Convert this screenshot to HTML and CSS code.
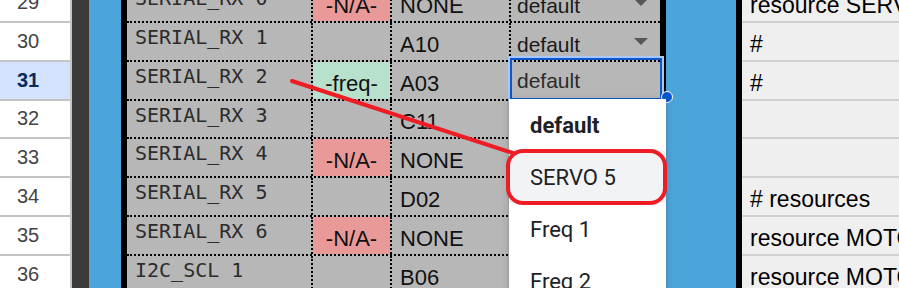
FILE: index.html
```html
<!DOCTYPE html>
<html lang="en">
<head>
    <meta charset="UTF-8">
    <title>Resource mapping</title>
    <link rel="stylesheet" href="styles.css">
</head>
<body>
    <div class="sheet">
        <!-- Row headers -->
        <div class="rownums">
            <div class="rn">29</div>
            <div class="rn">30</div>
            <div class="rn current">31</div>
            <div class="rn">32</div>
            <div class="rn">33</div>
            <div class="rn">34</div>
            <div class="rn">35</div>
            <div class="rn">36</div>
        </div>
        <div class="gutter"></div>
        <div class="bar blue"></div>
        <div class="bar black"></div>

        <!-- Pin table -->
        <div class="grid">
            <div class="row">
                <div class="cell name">SERIAL_RX 0</div>
                <div class="cell tag na">-N/A-</div>
                <div class="cell pin">NONE</div>
                <div class="cell opt"><span>default</span><i class="caret"></i></div>
            </div>
            <div class="row">
                <div class="cell name">SERIAL_RX 1</div>
                <div class="cell tag"></div>
                <div class="cell pin">A10</div>
                <div class="cell opt"><span>default</span><i class="caret"></i></div>
            </div>
            <div class="row">
                <div class="cell name">SERIAL_RX 2</div>
                <div class="cell tag freq">-freq-</div>
                <div class="cell pin">A03</div>
                <div class="cell opt selected"><span>default</span></div>
            </div>
            <div class="row">
                <div class="cell name">SERIAL_RX 3</div>
                <div class="cell tag"></div>
                <div class="cell pin">C11</div>
                <div class="cell opt"></div>
            </div>
            <div class="row">
                <div class="cell name">SERIAL_RX 4</div>
                <div class="cell tag na">-N/A-</div>
                <div class="cell pin">NONE</div>
                <div class="cell opt"></div>
            </div>
            <div class="row">
                <div class="cell name">SERIAL_RX 5</div>
                <div class="cell tag"></div>
                <div class="cell pin">D02</div>
                <div class="cell opt"></div>
            </div>
            <div class="row">
                <div class="cell name">SERIAL_RX 6</div>
                <div class="cell tag na">-N/A-</div>
                <div class="cell pin">NONE</div>
                <div class="cell opt"></div>
            </div>
            <div class="row">
                <div class="cell name">I2C_SCL 1</div>
                <div class="cell tag"></div>
                <div class="cell pin">B06</div>
                <div class="cell opt"></div>
            </div>
        </div>

        <div class="bar black"></div>
        <div class="bar blue wide"></div>
        <div class="bar black"></div>

        <!-- Generated config lines -->
        <div class="notes">
            <div class="note">resource SERVO 5 A03</div>
            <div class="note">#</div>
            <div class="note">#</div>
            <div class="note"></div>
            <div class="note"></div>
            <div class="note"># resources</div>
            <div class="note">resource MOTOR 1 B00</div>
            <div class="note">resource MOTOR 2 B01</div>
        </div>
    </div>

    <!-- Dropdown of the selected cell -->
    <span class="handle"></span>
    <div class="menu">
        <div class="item bold">default</div>
        <div class="item hover">SERVO 5</div>
        <div class="item">Freq 1</div>
        <div class="item">Freq 2</div>
    </div>

    <!-- Red annotation -->
    <svg class="marks" width="899" height="288" viewBox="0 0 899 288">
        <path d="M292 81 L513 153" stroke="#ee1c25" stroke-width="4" stroke-linecap="round" fill="none"/>
        <rect x="508" y="151" width="157" height="52" rx="15" stroke="#ee1c25" stroke-width="4" fill="none"/>
    </svg>
</body>
</html>
```

FILE: styles.css
```css
/* Page */
body {
    margin: 0;
    width: 899px;
    height: 288px;
    overflow: hidden;
    position: relative;
    background: #fff;
    font-family: 'Liberation Sans', Arial, sans-serif;
}

.sheet {
    display: flex;
    margin-top: -15.8px;
}

/* Row headers */
.rownums {
    width: 70px;
    border-right: 2px solid #c6c6c6;
    background: #fff;
}

.rn {
    height: 38.8px;
    box-sizing: border-box;
    border-bottom: 2px solid #c4c4c4;
    display: flex;
    align-items: center;
    padding-left: 17px;
    font-size: 20px;
    color: #444;
}

.rn.current {
    background: #d3e3fd;
    color: #0b2a5c;
    font-weight: bold;
}

/* Coloured strips between sheet columns */
.gutter {
    width: 17px;
    background: #3a3b3a;
}

.bar {
    width: 6px;
}

.bar.blue {
    width: 32px;
    background: #4ca5da;
}

.bar.blue.wide {
    width: 70px;
}

.bar.black {
    background: #000;
}

/* Pin table */
.grid {
    width: 533px;
    background: #b7b7b7;
}

.row {
    display: grid;
    grid-template-columns: 186px 79px 119px 149px;
    height: 38.8px;
    box-sizing: border-box;
    border-bottom: 2px dotted #000;
}

.cell {
    position: relative;
    display: flex;
    align-items: flex-end;
    padding-bottom: 3px;
    font-size: 22px;
    line-height: 25px;
    color: #111;
    white-space: nowrap;
}

.cell.name,
.cell.tag,
.cell.pin {
    border-right: 2px dotted #000;
    background-clip: padding-box;
}

.cell.name {
    align-items: flex-start;
    padding: 2px 0 0 8px;
    font-family: 'DejaVu Sans Mono', monospace;
    font-size: 20px;
    line-height: 24px;
    color: #2c2c2c;
}

.cell.tag {
    justify-content: center;
}

.cell.na {
    background-color: #ea9999;
}

.cell.freq {
    background-color: #b7e1cd;
}

.cell.pin {
    padding-left: 8px;
}

.cell.opt {
    padding-left: 6px;
    font-size: 21px;
    color: #1a1a1a;
}

.caret {
    margin-left: auto;
    margin-right: 12px;
    align-self: flex-start;
    margin-top: 15px;
    width: 0;
    height: 0;
    border-left: 7px solid transparent;
    border-right: 7px solid transparent;
    border-top: 7px solid #575757;
}

.cell.opt.selected {
    align-items: center;
    padding-bottom: 0;
    font-size: 21px;
    color: #2b2b2b;
}

.cell.opt.selected::after {
    content: "";
    position: absolute;
    left: -1px;
    right: -2px;
    top: -4px;
    bottom: -1px;
    border: 2px solid #0b57d0;
    box-shadow: 0 0 0 2px #a8c7fa;
}

/* Notes column */
.notes {
    flex: 1;
    background: #efefef;
    overflow: hidden;
}

.note {
    height: 38.8px;
    box-sizing: border-box;
    border-bottom: 2px solid #d0d0d0;
    display: flex;
    align-items: flex-end;
    padding: 0 0 3px 8px;
    font-size: 23px;
    line-height: 25px;
    color: #000;
    white-space: nowrap;
}

/* Dropdown */
.handle {
    position: absolute;
    left: 661px;
    top: 91px;
    width: 10px;
    height: 10px;
    border-radius: 50%;
    background: #0b57d0;
    border: 1.5px solid #fff;
}

.menu {
    position: absolute;
    left: 509px;
    top: 99px;
    width: 157px;
    height: 200px;
    background: #fff;
    box-shadow: 0 1px 2px rgba(60, 64, 67, 0.3), 0 2px 6px 2px rgba(60, 64, 67, 0.15);
    font-family: Roboto, 'Liberation Sans', sans-serif;
}

.item {
    height: 52px;
    display: flex;
    align-items: center;
    padding-left: 21px;
    font-size: 22px;
    color: #202124;
}

.item.bold {
    font-weight: bold;
}

.item.hover {
    background: #f1f3f4;
}

/* Annotation */
.marks {
    position: absolute;
    left: 0;
    top: 0;
}
```
